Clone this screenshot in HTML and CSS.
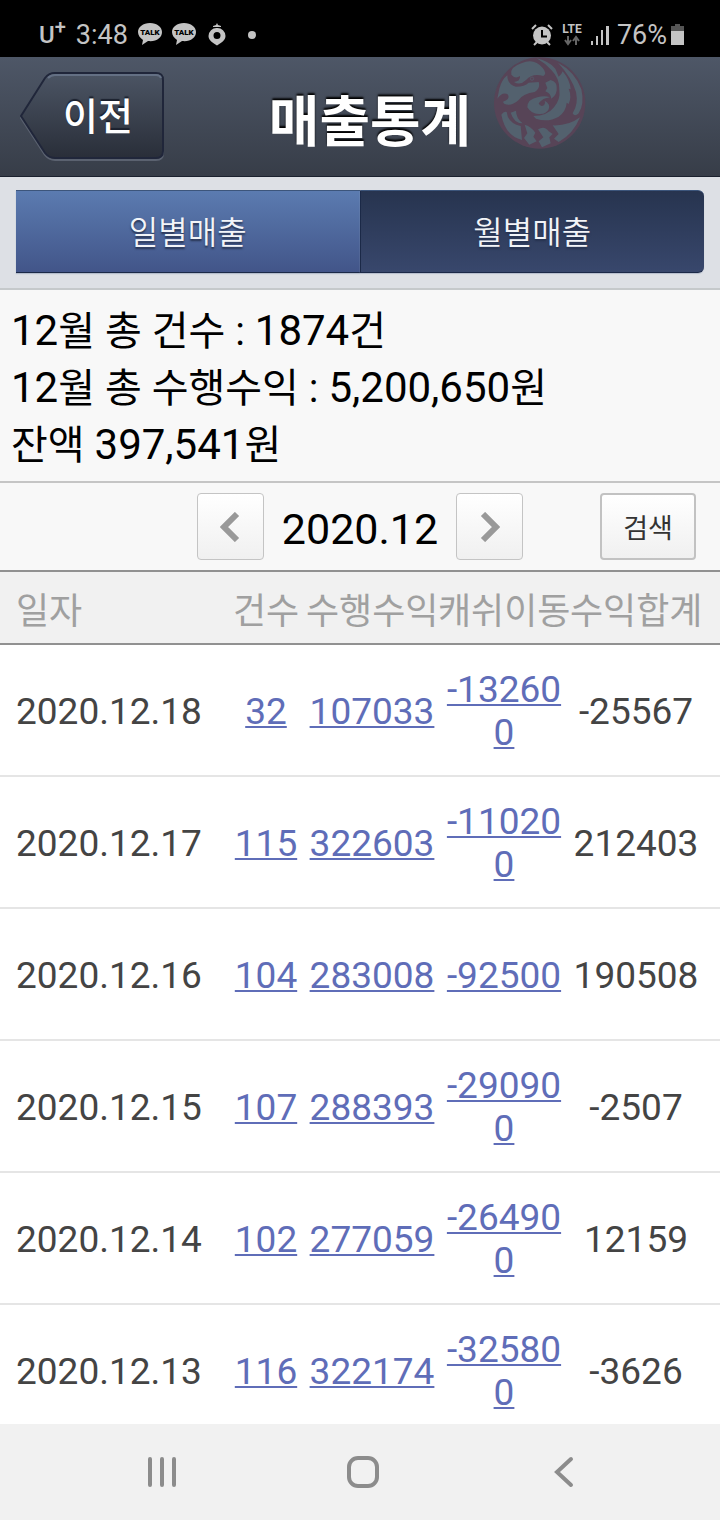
FILE: index.html
```html
<!DOCTYPE html>
<html lang="ko">
<head>
    <meta charset="UTF-8">
    <meta name="viewport" content="width=device-width, initial-scale=1.0">
    <title>매출통계</title>
    <link rel="stylesheet" href="styles.css">
</head>
<body>
    <div class="status-bar">
        <div class="status-left">
            <span class="carrier">U<sup>+</sup></span>
            <span class="clock">3:48</span>
            <svg class="talk" width="24" height="23" viewBox="0 0 24 23">
                <path fill="#c4c4c4" d="M12 0C5 0 0 4 0 9c0 3 2 6 5 8L4 22l6-4c8 1 14-3 14-9C24 4 19 0 12 0z"/>
                <text x="12" y="12" text-anchor="middle">TALK</text>
            </svg>
            <svg class="talk" width="24" height="23" viewBox="0 0 24 23">
                <path fill="#c4c4c4" d="M12 0C5 0 0 4 0 9c0 3 2 6 5 8L4 22l6-4c8 1 14-3 14-9C24 4 19 0 12 0z"/>
                <text x="12" y="12" text-anchor="middle">TALK</text>
            </svg>
            <svg class="ring" width="18" height="23" viewBox="0 0 18 23">
                <path fill="#c4c4c4" d="M9 0l1 2 3 1v1H5V3l3-1z"/>
                <path fill="#c4c4c4" fill-rule="evenodd" d="M9 5a8 8 0 0 0-8.500 8c0 4.500 4.500 7 8.500 9.500 4-2.500 8.500-5 8.500-9.500A8 8 0 0 0 9 5zm0 4a3.500 3.500 0 1 1 0 7 3.500 3.500 0 0 1 0-7z"/>
            </svg>
            <span class="dot"></span>
        </div>
        <div class="status-right">
            <svg width="22" height="22" viewBox="0 0 22 22">
                <circle cx="11" cy="11.500" r="9" fill="#c4c4c4"/>
                <path d="M1 5l4-4M21 5l-4-4M3 21l3-3M19 21l-3-3" stroke="#c4c4c4" stroke-width="2"/>
                <path d="M11 6v6.500h5" stroke="#000" stroke-width="2" fill="none"/>
            </svg>
            <svg class="lte" width="22" height="23" viewBox="0 0 22 23">
                <text x="11" y="10" text-anchor="middle">LTE</text>
                <path d="M7 13v7M4 17l3 4 3-4M15 22v-7M12 18l3-4 3 4" stroke="#666" stroke-width="2" fill="none"/>
            </svg>
            <svg width="18" height="20" viewBox="0 0 18 20">
                <path fill="#c4c4c4" d="M0 16h2v4H0zM5 11h2v9H5zM10 5h2v15h-2zM15 1h3v19h-3z"/>
            </svg>
            <span class="battery">
                <span class="clock">76%</span>
                <svg width="13" height="21" viewBox="0 0 13 21">
                    <path fill="#555" d="M4 0h5v2h4v6H0V2h4z"/>
                    <path fill="#c4c4c4" d="M0 7h13v14H0z"/>
                </svg>
            </span>
        </div>
    </div>

    <header class="title-bar">
        <button type="button" class="back-btn">
            <svg class="back-shape" width="144" height="90" viewBox="0 0 144 90">
                <defs>
                    <linearGradient id="backFill" x1="0" y1="0" x2="0" y2="1">
                        <stop offset="0" stop-color="#4c5564"/>
                        <stop offset="1" stop-color="#292e39"/>
                    </linearGradient>
                </defs>
                <path d="M1 46L25 8Q29 3 35 3H136Q143 3 143 10V81Q143 88 136 88H35Q29 88 25 83Z" fill="none" stroke="#5b6270" stroke-width="2"/>
                <path d="M1 44L25 6Q29 1 35 1H136Q143 1 143 8V79Q143 86 136 86H35Q29 86 25 81Z" fill="url(#backFill)" stroke="#20263a" stroke-width="2"/>
                <path d="M28 6Q31 3 35 3H136Q140 3 141 6" fill="none" stroke="#647084" stroke-width="2"/>
            </svg>
            <span>이전</span>
        </button>
        <h1>매출통계</h1>
        <svg class="emblem" width="100" height="100" viewBox="0 0 300 300">
            <circle cx="149" cy="147" r="137" fill="#574457"/>
            <g fill="#53616e">
                <path d="M94 28Q132 10 158 42Q172 58 160 66Q128 56 108 78Q90 96 72 84Q92 82 90 66Q76 76 64 62Q58 40 94 28Z"/>
                <path d="M28 104Q36 76 52 64Q52 92 78 98Q104 98 116 86L146 84Q152 102 134 114Q100 118 86 138Q64 158 44 150Q34 142 46 140Q62 132 52 120Q36 114 22 134Z"/>
                <path d="M140 13Q178 22 196 44L206 68Q216 60 218 52Q240 78 242 106L236 104Q246 128 236 150L230 146Q228 172 206 188Q174 206 138 194L130 186Q172 186 192 160Q212 136 208 108Q210 74 184 48Q166 28 140 13Z"/>
                <path d="M204 26Q256 54 274 106Q284 150 266 178Q254 190 248 178Q266 150 258 114Q246 72 204 26Z"/>
                <path d="M166 86L182 78Q202 84 200 102Q202 122 184 134Q182 118 166 112L172 102Z"/>
                <path d="M112 160Q112 136 142 130Q164 124 180 130Q158 132 146 148Q150 160 162 154Q168 148 164 140Q182 150 176 166Q168 182 146 180Q124 180 112 160Z"/>
                <path d="M34 182Q42 170 50 174Q54 208 92 216L96 258Q46 246 34 182Z"/>
                <path d="M62 176L78 170Q78 192 98 208Q72 208 62 176Z"/>
                <path d="M104 212Q122 216 136 236L130 248L140 262L118 272L102 252L112 238Z"/>
                <path d="M144 226Q164 214 176 232L188 240L178 250L182 268L156 280L146 262L160 250Z"/>
                <path d="M188 214Q236 216 270 190Q250 240 206 264L192 254L206 240Z"/>
            </g>
            <circle cx="126" cy="74" r="5" fill="none" stroke="#53616e" stroke-width="2"/>
        </svg>
    </header>

    <nav class="tabs">
        <button type="button" class="tab">일별매출</button>
        <button type="button" class="tab tab-active">월별매출</button>
    </nav>

    <section class="summary">
        <p><span class="num">12</span>월 총 건수 : <span class="num">1874</span>건</p>
        <p><span class="num">12</span>월 총 수행수익 : <span class="num">5,200,650</span>원</p>
        <p>잔액 <span class="num">397,541</span>원</p>
    </section>

    <div class="month-bar">
        <div class="month-picker">
            <button type="button" class="month-btn" aria-label="이전 달">
                <svg width="20" height="30" viewBox="0 0 20 30"><path d="M17 2L4 15l13 13" fill="none" stroke="#999" stroke-width="6"/></svg>
            </button>
            <span class="month">2020.12</span>
            <button type="button" class="month-btn" aria-label="다음 달">
                <svg width="20" height="30" viewBox="0 0 20 30"><path d="M3 2l13 13L3 28" fill="none" stroke="#999" stroke-width="6"/></svg>
            </button>
        </div>
        <button type="button" class="search-btn">검색</button>
    </div>

    <main class="list">
        <table class="sales">
            <thead>
                <tr>
                    <th class="date">일자</th>
                    <th class="count">건수</th>
                    <th class="money">수행수익</th>
                    <th class="money">캐쉬이동</th>
                    <th class="total">수익합계</th>
                </tr>
            </thead>
            <tbody>
                <tr>
                    <td class="date">2020.12.18</td>
                    <td><a href="#">32</a></td>
                    <td><a href="#">107033</a></td>
                    <td><a href="#">-132600</a></td>
                    <td class="total">-25567</td>
                </tr>
                <tr>
                    <td class="date">2020.12.17</td>
                    <td><a href="#">115</a></td>
                    <td><a href="#">322603</a></td>
                    <td><a href="#">-110200</a></td>
                    <td class="total">212403</td>
                </tr>
                <tr>
                    <td class="date">2020.12.16</td>
                    <td><a href="#">104</a></td>
                    <td><a href="#">283008</a></td>
                    <td><a href="#">-92500</a></td>
                    <td class="total">190508</td>
                </tr>
                <tr>
                    <td class="date">2020.12.15</td>
                    <td><a href="#">107</a></td>
                    <td><a href="#">288393</a></td>
                    <td><a href="#">-290900</a></td>
                    <td class="total">-2507</td>
                </tr>
                <tr>
                    <td class="date">2020.12.14</td>
                    <td><a href="#">102</a></td>
                    <td><a href="#">277059</a></td>
                    <td><a href="#">-264900</a></td>
                    <td class="total">12159</td>
                </tr>
                <tr>
                    <td class="date">2020.12.13</td>
                    <td><a href="#">116</a></td>
                    <td><a href="#">322174</a></td>
                    <td><a href="#">-325800</a></td>
                    <td class="total">-3626</td>
                </tr>
            </tbody>
        </table>
    </main>

    <footer class="nav-bar">
        <button type="button" aria-label="최근 앱">
            <svg width="32" height="32" viewBox="0 0 32 32"><path d="M4 3v26M16 3v26M28 3v26" stroke="#8c8c8c" stroke-width="4" stroke-linecap="round"/></svg>
        </button>
        <button type="button" aria-label="홈">
            <svg width="32" height="32" viewBox="0 0 32 32"><rect x="2" y="2" width="28" height="28" rx="9" fill="none" stroke="#8c8c8c" stroke-width="4"/></svg>
        </button>
        <button type="button" aria-label="뒤로">
            <svg width="32" height="32" viewBox="0 0 32 32"><path d="M23 3L9 16l14 13" fill="none" stroke="#8c8c8c" stroke-width="4" stroke-linecap="round"/></svg>
        </button>
    </footer>
</body>
</html>
```
FILE: styles.css
```css
* {
    box-sizing: border-box;
}
body {
    margin: 0;
    height: 100vh;
    display: flex;
    flex-direction: column;
    font-family: Roboto, "Noto Sans CJK KR", sans-serif;
    background: #fff;
}
button {
    font-family: inherit;
    padding: 0;
    border: none;
    background: none;
    cursor: pointer;
}
svg {
    display: block;
}

/* status bar */
.status-bar {
    display: flex;
    flex-shrink: 0;
    justify-content: space-between;
    align-items: center;
    height: 57px;
    padding: 12px 36px 0 39px;
    background: #000;
    color: #c4c4c4;
}
.status-left {
    display: flex;
    align-items: center;
    gap: 10px;
}
.status-right {
    display: flex;
    align-items: center;
    gap: 8px;
}
.battery {
    display: flex;
    align-items: center;
    gap: 4px;
}
.carrier {
    font-size: 24px;
    font-weight: 500;
}
.carrier sup {
    font-size: 20px;
    line-height: 0;
}
.clock {
    font-size: 27px;
}
.talk text {
    font: 900 8px Roboto, sans-serif;
}
.lte text {
    font: bold 12px Roboto, sans-serif;
    fill: #c4c4c4;
}
.ring {
    margin-left: 2px;
}
.dot {
    width: 8px;
    height: 8px;
    margin-left: 12px;
    border-radius: 50%;
    background: #c4c4c4;
}

/* title bar */
.title-bar {
    position: relative;
    display: grid;
    flex-shrink: 0;
    grid-template-columns: 144px 1fr 124px;
    align-items: center;
    height: 120px;
    padding: 0 20px;
    background: linear-gradient(#4e5767, #373d48);
    border-bottom: 1px solid #1b212e;
}
.title-bar h1 {
    margin: 0;
    padding-top: 10px;
    font-size: 55px;
    line-height: 64px;
    text-align: center;
    color: #fff;
    text-shadow: 0 -2px 2px #000;
}
.back-btn {
    position: relative;
    height: 90px;
    padding: 0 0 6px 12px;
    color: #fff;
    font-size: 38px;
    font-weight: 500;
    text-shadow: 0 -2px 1px #1b212e;
}
.back-btn span {
    position: relative;
}
.back-shape {
    position: absolute;
    top: 0;
    left: 0;
}
.emblem {
    position: absolute;
    top: -3px;
    left: 68%;
}

/* tabs */
.tabs {
    display: flex;
    flex-shrink: 0;
    padding: 13px 16px 15px;
    background: #dde0e5;
    border-bottom: 2px solid #c5c9cb;
}
.tab {
    flex: 1;
    height: 83px;
    padding-bottom: 4px;
    border-top: 1px solid #3c557b;
    border-bottom: 1px solid #1b2947;
    background: linear-gradient(#5b7bb0, #425589);
    color: #f2f4f8;
    font-size: 32px;
    font-weight: 350;
    text-shadow: 0 2px 2px #26324f;
    box-shadow: 0 1px 1px #b4bccb;
}
.tab-active {
    border-left: 1px solid #1b2947;
    border-radius: 0 6px 6px 0;
    background: linear-gradient(#27344f, #38476c);
}

/* monthly totals */
.summary {
    flex-shrink: 0;
    padding: 12px 11px 8px;
    background: #f8f8f8;
    border-bottom: 2px solid #c5c5c5;
    font-size: 40px;
    line-height: 57px;
    color: #000;
}
.summary p {
    margin: 0;
    height: 57px;
}
.summary .num {
    font-size: 42px;
}

/* month picker */
.month-bar {
    display: grid;
    flex-shrink: 0;
    grid-template-columns: 1fr auto 1fr;
    align-items: center;
    height: 87px;
    padding: 0 24px;
    background: #f8f8f8;
}
.month-picker {
    grid-column: 2;
    display: flex;
    align-items: center;
    gap: 18px;
}
.month {
    padding-top: 4px;
    font-size: 43px;
}
.month-btn {
    display: flex;
    align-items: center;
    justify-content: center;
    width: 67px;
    height: 67px;
    border: 1px solid #c4c4c4;
    border-radius: 4px;
    background: linear-gradient(#fff, #f0f0f0);
}
.search-btn {
    justify-self: end;
    width: 96px;
    height: 67px;
    border: 2px solid #c2c2c2;
    border-radius: 4px;
    background: linear-gradient(#fff, #f0f0f0);
    color: #333;
    font-size: 27px;
}

/* sales table */
.list {
    flex: 1;
    min-height: 0;
    overflow: hidden;
}
.sales {
    width: 100%;
    table-layout: fixed;
    border-collapse: separate;
    border-spacing: 0;
    text-align: center;
}
.sales th {
    height: 75px;
    padding: 0;
    border-top: 2px solid #919191;
    border-bottom: 2px solid #919191;
    background: #f1f1f1;
    color: #a0a0a0;
    font-size: 36px;
    font-weight: 400;
    white-space: nowrap;
}
.sales td {
    height: 132px;
    padding: 2px 0 0;
    border-bottom: 2px solid #e5e5e5;
    color: #444;
    font-size: 37px;
    line-height: 43px;
    word-break: break-all;
}
.sales .date {
    padding-left: 16px;
    text-align: left;
}
.sales .count {
    width: 80px;
}
.sales .money {
    width: 132px;
}
.sales .total {
    width: 150px;
    padding-right: 18px;
}
.sales a {
    color: #5f6db8;
    text-underline-offset: 2px;
    text-decoration-thickness: 2px;
}

/* navigation bar */
.nav-bar {
    display: flex;
    flex-shrink: 0;
    justify-content: space-around;
    align-items: center;
    height: 96px;
    padding: 0 56px 0 61px;
    background: #f1f1f1;
}
```
